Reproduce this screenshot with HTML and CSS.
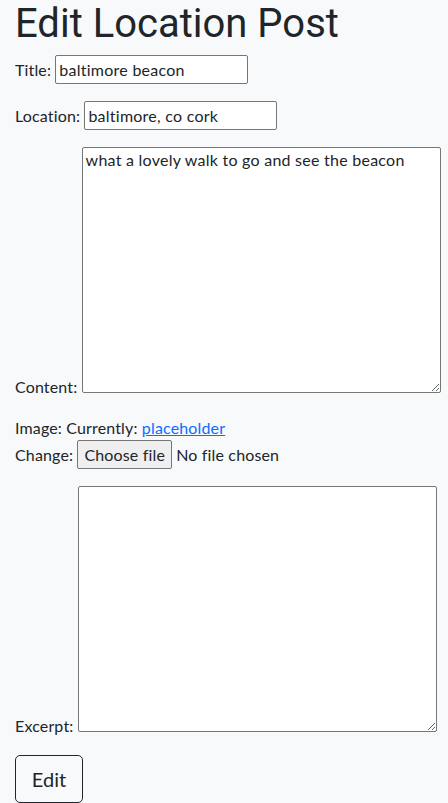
FILE: index.html
```html
<!DOCTYPE html>
<html lang="en">
<head>
<meta charset="utf-8">
<title>Edit Location Post</title>
<link rel="stylesheet" href="styles.css">
</head>
<body>
<main class="container">
  <h1 class="page-title">Edit Location Post</h1>
  <form class="post-form">
    <p class="field"><label for="id_title">Title:</label> <input class="text-input title-input" type="text" id="id_title" value="baltimore beacon"></p>
    <p class="field"><label for="id_location">Location:</label> <input class="text-input location-input" type="text" id="id_location" value="baltimore, co cork"></p>
    <p class="field"><label for="id_content">Content:</label> <textarea class="area content-area" id="id_content">what a lovely walk to go and see the beacon</textarea></p>
    <p class="field"><label>Image:</label> Currently: <a class="file-link" href="#">placeholder</a><br>
      <span class="change-row">Change: <span class="file-btn">Choose file</span> <span class="file-status">No file chosen</span></span></p>
    <p class="field"><label for="id_excerpt">Excerpt:</label> <textarea class="area excerpt-area" id="id_excerpt"></textarea></p>
    <button class="submit-btn" type="button">Edit</button>
  </form>
</main>
</body>
</html>
```
FILE: styles.css
```css
html, body {
  margin: 0;
  padding: 0;
}
body {
  background: #f8f9fa;
  color: #212529;
  font-family: Lato, "Noto Sans", sans-serif;
  font-size: 16px;
  line-height: 1.5;
  letter-spacing: 0.15px;
}
.container {
  padding: 0 15px;
}
.page-title {
  font-family: Roboto, "Liberation Sans", sans-serif;
  font-weight: 400;
  font-size: 40px;
  line-height: 1.2;
  letter-spacing: 0;
  margin: 0 0 7px;
}
.field {
  margin: 0 0 17px;
  white-space: nowrap;
}
.text-input {
  font-family: inherit;
  font-size: 16px;
  letter-spacing: 0.25px;
  color: #212529;
  background: #fff;
  border: 1px solid #767676;
  border-radius: 2px;
  padding: 1px 3px;
  height: 29px;
  box-sizing: border-box;
}
.title-input { width: 193px; }
.location-input { width: 193px; }
.area {
  font-family: inherit;
  font-size: 16px;
  letter-spacing: 0.25px;
  color: #212529;
  background: #fff;
  border: 1px solid #767676;
  border-radius: 2px;
  padding: 2px 3px;
  box-sizing: border-box;
  vertical-align: baseline;
  resize: both;
  white-space: pre-wrap;
}
.content-area { width: 359px; height: 246px; }
.excerpt-area { width: 359px; height: 246px; }
.file-link { color: #0d6efd; }
.change-row { display: inline-block; }
.file-btn {
  display: inline-block;
  background: #efefef;
  border: 1px solid #767676;
  border-radius: 2px;
  padding: 0 6px;
  line-height: 27px;
  color: #212529;
}
.submit-btn {
  font-family: inherit;
  font-size: 20px;
  color: #212529;
  background: transparent;
  border: 1px solid #212529;
  border-radius: 5px;
  width: 68px;
  height: 48px;
  padding: 0;
  margin: 0;
}
```
